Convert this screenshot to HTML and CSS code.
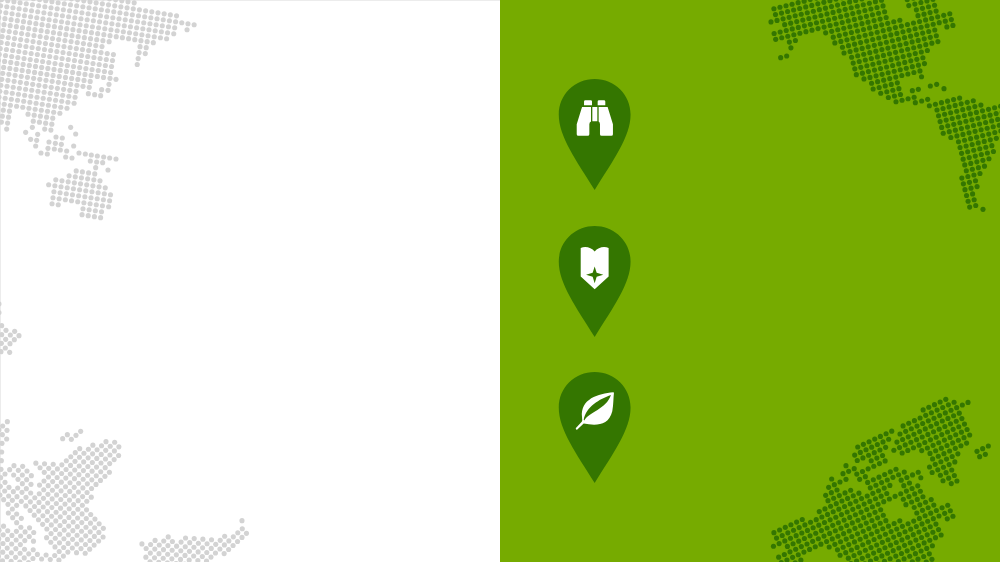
FILE: index.html
```html
<!DOCTYPE html>
<html lang="en">
<head>
<meta charset="utf-8">
<title>Map pins</title>
<link rel="stylesheet" href="styles.css">
</head>
<body>
<main class="split">
  <section class="panel panel-light">
    <svg class="map" id="map-light" viewBox="0 0 1500 1686" preserveAspectRatio="xMidYMid slice" aria-hidden="true"></svg>
  </section>
  <section class="panel panel-green">
    <svg class="map" id="map-green" viewBox="0 0 1500 1686" preserveAspectRatio="xMidYMid slice" aria-hidden="true"></svg>
    <ul class="pins">
      <li class="pin-item">
        <svg class="pin" viewBox="24 26 219 334" role="img" aria-label="Binoculars">
          <path class="pin-body" d="M134 26C194 26 242 73 242 133C242 200 190 270 134 360C78 270 26 200 26 133C26 73 74 26 134 26Z"/>
          <path class="pin-icon" d="M102 105V94Q102 90 106 90H122Q126 90 126 94V105ZM143 105V94Q143 90 147 90H162Q166 90 166 94V105ZM96 110H123V154Q118 156 118 162V192Q118 197 113 197H85Q80 197 80 192V162ZM173 110H146V154Q150 156 150 162V192Q150 197 155 197H184Q189 197 189 192V162ZM127 110H142V153H127Z"/>
        </svg>
      </li>
      <li class="pin-item">
        <svg class="pin" viewBox="24 26 219 334" role="img" aria-label="Badge">
          <path class="pin-body" d="M134 26C194 26 242 73 242 133C242 200 190 270 134 360C78 270 26 200 26 133C26 73 74 26 134 26Z"/>
          <path class="pin-icon" d="M92 92C106 86 124 90 134 103C144 90 162 86 176 92V178L134 216L92 178Z"/>
          <path class="pin-body" d="M134 148L140 167L160 173L140 179L134 198L128 179L108 173L128 167Z"/>
        </svg>
      </li>
      <li class="pin-item">
        <svg class="pin" viewBox="24 26 219 334" role="img" aria-label="Leaf">
          <path class="pin-body" d="M134 26C194 26 242 73 242 133C242 200 190 270 134 360C78 270 26 200 26 133C26 73 74 26 134 26Z"/>
          <path class="pin-icon" d="M190 87C145 91 90 107 96 162C96 168 98 172 95 176L77 195Q77 200 81 200L101 181C136 188 176 189 187 144C191 121 190 104 192 89Q192 87 190 87Z"/>
          <path class="pin-body" d="M183 95C149 107 108 130 101 170L103 172C116 146 169 138 183 95Z"/>
        </svg>
      </li>
    </ul>
  </section>
</main>
<script src="maps.js"></script>
</body>
</html>
```
FILE: styles.css
```css
body {
  margin: 0;
  background: #ffffff;
}

.split {
  display: grid;
  grid-template-columns: 1fr 1fr;
  min-height: 100vh;
}

.panel {
  position: relative;
  overflow: hidden;
}

.panel-light {
  background: #ffffff;
  box-shadow: inset 1px 1px 0 #ececec;
}

.panel-green {
  display: flex;
  background: #76ab00;
}

/* The dotted world map lies behind the content of a panel. */
.map {
  position: absolute;
  inset: 0;
  width: 100%;
  height: 100%;
}

.panel-light .map {
  fill: #d3d3d3;
}

.panel-green .map {
  fill: #347600;
}

.pins {
  position: relative;
  display: flex;
  flex-direction: column;
  justify-content: space-between;
  gap: 24px;
  margin: 0;
  padding: 79px 58px;
  list-style: none;
}

.pin-item {
  display: flex;
}

.pin {
  width: 73px;
  height: 111px;
}

.pin-body {
  fill: #347600;
}

.pin-icon {
  fill: #ffffff;
}
```
FILE: maps.js
```javascript
// Each land mass is a set of outlines filled with dots on a tilted grid.
// at: offset in the map, origin/u/v: the grid, shapes: outlines (even-odd), dots: single dots.
const asia = { origin: [237, 459], u: [18.55, 3], v: [-2.8, 17.9] };
const south = { origin: [318, 50], u: [12.6, 13.85], v: [13.4, -12.15] };
const america = { origin: [1069, 224], u: [18.15, -4.6], v: [4.7, 17.4] };
const north = { origin: [359, 150], u: [17, -7.9], v: [7.8, 16.4] };

function grid(base, dx, dy) {
  return { origin: [base.origin[0] - dx, base.origin[1] - dy], u: base.u, v: base.v, at: [dx, dy] };
}

const light = [
  {
    ...grid(asia, 0, 0),
    shapes: [
      "-20,-20 415,-20 413,18 480,30 540,40 538,56 596,66 592,84 570,82 568,98 550,97 550,80 534,78 530,108 510,125 475,120 469,136 450,135 447,152 443,170 426,172 423,202 403,202 411,130 338,118 337,134 318,134 316,150 352,157 345,210 322,225 302,238 280,250 277,272 257,270 240,262 232,320 205,336 171,345 164,385 145,395 90,375 74,341 45,329 38,340 30,398 12,397 14,377 -20,377",
      "220,502 293,514 293,530 310,535 326,556 342,577 336,630 314,630 311,662 254,656 238,632 238,614 186,606 184,624 145,618 150,566 136,562 138,546 158,548 158,530 198,537 198,520 218,520"
    ],
    dots: "330,235 348,238 327,253 305,269 324,271 302,287 284,284 265,281 249,259 77,397 113,403 97,382 92,418 110,421 107,438 123,459 142,462 212,382 227,402 221,438 168,411 187,414 147,426 166,430 184,433 144,445 163,447 181,450 200,453 197,471 216,474 237,459 256,462 274,465 292,468 311,471 329,474 348,477 271,483 290,486 308,488 287,503 324,510"
  },
  {
    at: [0, 885],
    dots: "-3,27 -3,53 5,92 18,106 44,109 5,119 31,120 57,122 17,133 43,134 4,145 30,146 16,159 3,170 29,172 22,380 8,393 21,406 -3,405 7,419 20,432 6,445 5,471 4,497 3,523 188,431 202,419 214,433 228,421 242,409"
  },
  {
    ...south, at: [0, 1275],
    shapes: [
      "108,103 188,108 239,60 254,74 280,50 293,62 318,39 352,42 368,60 366,96 338,125 338,147 285,190 284,225 268,232 268,248 320,305 318,345 258,395 200,392 178,396 186,412 128,415 135,380 162,382 128,340 130,312 66,243 80,230 106,204 108,180 134,157 98,116",
      "-10,292 12,290 25,308 50,306 62,295 88,298 110,320 108,356 78,352 78,362 108,364 108,374 135,410 -10,425"
    ],
    dots: "42,122 68,124 29,134 55,136 81,138 15,147 41,150 67,150 94,152 2,158 54,163 80,164 15,172 67,176 93,178 1,184 27,187 53,189 79,191 14,198 40,200 66,202 92,204 0,210 26,213 51,215 78,217 11,224 37,226 64,229 24,238 50,241 37,252 25,264 50,267 38,278 64,280 50,293"
  },
  {
    at: [390, 1500], origin: [-72, -175], u: south.u, v: south.v,
    shapes: [
      "26,122 45,128 60,124 75,112 98,114 114,101 130,115 142,130 155,115 165,105 245,111 258,124 282,100 296,112 309,102 335,78 359,102 335,127 282,174 270,160 230,200 40,200 36,172 47,158 24,138"
    ],
    dots: "336,62"
  }
];

const green = [
  {
    ...grid(america, 780, 0),
    shapes: [
      "32,20 120,-2 130,-20 374,-20 388,49 388,58 424,48 432,66 464,60 458,18 436,20 436,-20 528,-20 538,36 576,26 588,74 548,84 546,68 532,80 542,126 511,135 510,152 496,160 503,190 488,204 494,232 478,236 472,223 420,238 430,285 466,281 470,298 404,315 400,300 382,302 376,290 356,288 354,276 333,275 326,252 303,245 303,234 282,234 266,168 244,168 238,134 216,136 210,106 188,104 176,96 112,112 115,128 102,134 98,154 86,150 82,137 78,122 40,128 34,94 68,86 66,70 28,76 24,62 38,52"
    ],
    dots: "62,173 80,168 511,258 530,253 552,266 457,272 475,268 466,308 485,303 503,298"
  },
  {
    ...grid(america, 1140, 225),
    shapes: [
      "138,92 142,80 240,56 250,70 284,64 290,80 306,77 314,92 350,83 380,96 380,185 345,198 349,232 334,254 322,278 308,300 296,308 300,340 286,346 296,395 262,406 236,312 248,296 228,205 206,196 202,184 182,180 164,110 150,100"
    ],
    dots: "309,403"
  },
  {
    ...north, at: [1050, 1155],
    shapes: [
      "150,122 212,90 210,72 290,31 298,45 316,40 324,56 356,41 364,54 330,72 346,98 370,150 354,184 340,190 328,214 314,242 331,290 302,307 296,292 276,298 262,274 244,272 228,244 242,232 230,205 212,206 204,190 154,215 147,198 130,205 122,194 138,184 132,170 147,160 140,146 156,136",
      "14,186 128,127 136,140 127,166 118,192 108,212 116,230 22,278 4,250 15,240 26,256 38,249 62,238 52,222 22,237 5,212 20,200",
      "-237,441 -141,393 -127,405 -103,393 -100,377 -69,359 -43,333 3,305 13,322 28,314 36,326 52,320 44,292 140,241 150,256 164,250 172,264 205,250 222,280 206,286 182,280 188,292 204,292 228,334 244,333 262,362 293,349 318,394 291,412 282,394 266,404 283,450 256,466 256,482 246,506 256,545 15,545 -39,517 -49,501 -65,497 -79,487 -137,511 -147,517 -139,527 -175,545 -217,545 -207,525 -223,521 -221,509 -191,499 -197,481 -229,495 -239,483 -229,469",
      "130,290 146,288 156,312 132,324 122,320 126,305",
      "108,358 150,338 156,358 164,370 182,368 194,390 172,406 152,398 132,406 116,402 102,372"
    ],
    dots: "-12,242 -4,259 -21,266 -12,283 -30,291 -55,282 -47,299 -64,307 -39,315 -56,323 -73,331 -66,347 29,283 46,275 381,199 398,191 415,183 406,208 389,215"
  }
];

function points(text) {
  return text.split(" ").map(pair => pair.split(",").map(Number));
}

function inside(x, y, rings) {
  let hit = false;
  for (const ring of rings) {
    for (let i = 0, j = ring.length - 1; i < ring.length; j = i++) {
      const [ax, ay] = ring[i];
      const [bx, by] = ring[j];
      if ((ay > y) !== (by > y) && x < (bx - ax) * (y - ay) / (by - ay) + ax) hit = !hit;
    }
  }
  return hit;
}

function draw(id, regions) {
  const svg = document.getElementById(id);
  for (const region of regions) {
    const group = document.createElementNS("http://www.w3.org/2000/svg", "g");
    group.setAttribute("transform", `translate(${region.at})`);
    const centres = points(region.dots);
    if (region.shapes) {
      const rings = region.shapes.map(points);
      const { origin, u, v } = region;
      for (let a = -80; a <= 80; a++) {
        for (let b = -80; b <= 80; b++) {
          const x = origin[0] + a * u[0] + b * v[0];
          const y = origin[1] + a * u[1] + b * v[1];
          const taken = centres.some(c => Math.hypot(c[0] - x, c[1] - y) < 9);
          if (!taken && inside(x, y, rings)) centres.push([x, y]);
        }
      }
    }
    for (const [x, y] of centres) {
      const dot = document.createElementNS("http://www.w3.org/2000/svg", "circle");
      dot.setAttribute("cx", x);
      dot.setAttribute("cy", y);
      dot.setAttribute("r", 7.7);
      group.append(dot);
    }
    svg.append(group);
  }
}

draw("map-light", light);
draw("map-green", green);
```
